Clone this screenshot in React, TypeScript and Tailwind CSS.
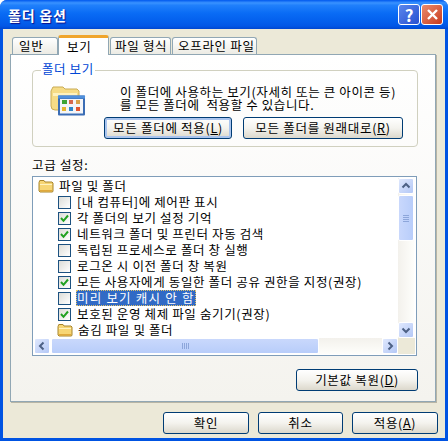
import React from "react";

const FONT = "font-['Noto_Sans_CJK_KR','Liberation_Sans',sans-serif]";

const ROWS = [
  { label: "[내 컴퓨터]에 제어판 표시", checked: false },
  { label: "각 폴더의 보기 설정 기억", checked: true },
  { label: "네트워크 폴더 및 프린터 자동 검색", checked: true },
  { label: "독립된 프로세스로 폴더 창 실행", checked: false },
  { label: "로그온 시 이전 폴더 창 복원", checked: false },
  { label: "모든 사용자에게 동일한 폴더 공유 권한을 지정(권장)", checked: true },
  { label: "미리 보기 캐시 안 함", checked: false, selected: true },
  { label: "보호된 운영 체제 파일 숨기기(권장)", checked: true },
];

const Folder = () => (
  <svg width="16" height="14" viewBox="0 0 16 14" className="shrink-0">
    <path d="M1 3.5 L1.8 1.5 H6 L7 3 H14 L15 4 V12.5 L14 13 H2 L1 12 Z" fill="#f7d675" stroke="#a8852c" strokeWidth="1" />
    <path d="M2 5 H14 V6 H2 Z" fill="#fff3c0" />
    <path d="M2 11 H14 V12.5 H2 Z" fill="#e0a93c" />
  </svg>
);

const Check = () => (
  <svg width="9" height="9" viewBox="0 0 9 9">
    <path d="M1 4 L3.5 6.8 L8 1.5" fill="none" stroke="#21a121" strokeWidth="2" />
  </svg>
);

const Arrow = ({ dir }: { dir: "up" | "down" | "left" | "right" }) => {
  const d = {
    up: "M1.5 6.5 L5 3 L8.5 6.5",
    down: "M1.5 3.5 L5 7 L8.5 3.5",
    left: "M6.5 1.5 L3 5 L6.5 8.5",
    right: "M3.5 1.5 L7 5 L3.5 8.5",
  }[dir];
  return (
    <svg width="10" height="10" viewBox="0 0 10 10">
      <path d={d} fill="none" stroke="#4d6185" strokeWidth="2" />
    </svg>
  );
};

const ScrollBtn = ({ dir }: { dir: "up" | "down" | "left" | "right" }) => (
  <div className="w-4 h-4 shrink-0 flex items-center justify-center rounded-[2px] border border-white bg-gradient-to-br from-[#dfe8fd] to-[#b4c8f6]">
    <Arrow dir={dir} />
  </div>
);

const Button = ({
  className,
  focused,
  children,
}: {
  className: string;
  focused?: boolean;
  children: React.ReactNode;
}) => (
  <div
    className={`${className} flex items-center justify-center rounded-[3px] border border-[#003c74] bg-gradient-to-b from-white via-[#f4f3ee] to-[#dcd8cc] text-[12.5px] leading-none text-black tracking-[0.7px] ${
      focused ? "shadow-[inset_0_0_0_2px_#a9c4ee]" : ""
    }`}
  >
    <span>{children}</span>
  </div>
);

const Tab = ({ label, className }: { label: string; className: string }) => (
  <div
    className={`${className} h-[17px] mt-[2px] flex items-center whitespace-nowrap rounded-t-[3px] border border-b-0 border-[#91a7b4] bg-gradient-to-b from-white to-[#ecebe4] text-[12.5px] leading-none tracking-[0.7px]`}
  >
    {label}
  </div>
);

const ViewIcon = () => (
  <svg width="36" height="30" viewBox="0 0 36 30">
    <path d="M1 5 L3 1 H13 L15 3 H27 L29 5 V24 H5 Q1 24 1 20 Z" fill="#f6dc86" stroke="#c9ab55" />
    <path d="M3 7 H27 V10 H3 Z" fill="#fff2bd" />
    <rect x="8" y="9.5" width="27" height="20" rx="1" fill="#3b6db5" />
    <rect x="8" y="9.5" width="27" height="3" fill="#4f8fdc" />
    <rect x="10" y="13" width="23" height="14.5" fill="#f4f5f8" />
    <rect x="12" y="14" width="5" height="4" fill="#3fa535" />
    <rect x="19" y="14" width="4" height="4" fill="#d8684e" />
    <rect x="26" y="14" width="4" height="4" fill="#d9a24b" />
    <rect x="12" y="21" width="4" height="4" fill="#e7b52f" />
    <rect x="19" y="21" width="4" height="4" fill="#2f86c9" />
    <rect x="26" y="21" width="4" height="4" fill="#e2552f" />
  </svg>
);

export default function App() {
  return (
    <div className={`${FONT} w-[448px] h-[441px] flex flex-col overflow-hidden rounded-t-[7px] bg-[#0053e2] text-black select-none`}>
      {/* Title bar */}
      <div className="h-[29px] shrink-0 flex items-center pl-[8px] pr-[5px] bg-[linear-gradient(to_bottom,#0058ee_0%,#3a93ff_10%,#2080fb_18%,#0a6cf5_45%,#0461ee_70%,#0257e6_90%,#0047d0_100%)]">
        <span className="text-white font-bold text-[14px] leading-none tracking-[0.8px] [text-shadow:1px_1px_1px_#0f1089]">폴더 옵션</span>
        <div className="ml-auto flex gap-[1px]">
          <div className="w-[22px] h-[21px] flex items-center justify-center rounded-[3px] border border-white bg-gradient-to-br from-[#5a86ec] to-[#2a4fd0] text-white font-bold text-[17px] leading-none">?</div>
          <div className="w-[22px] h-[21px] flex items-center justify-center rounded-[3px] border border-white bg-gradient-to-br from-[#ea8a6c] to-[#c8381a]">
            <svg width="13" height="13" viewBox="0 0 13 13">
              <path d="M2 2 L11 11 M11 2 L2 11" stroke="#fff" strokeWidth="2.4" />
            </svg>
          </div>
        </div>
      </div>

      {/* Client area */}
      <div className="flex-1 min-h-0 ml-[3px] mr-[3px] mb-[3px] bg-[#ece9d8] flex flex-col pl-[7px] pr-[2px] pt-[6px]">
        {/* Tabs */}
        <div className="h-[19px] flex items-end pl-[2px] pr-[8px]">
          <Tab label="일반" className="w-[46px] pl-[6px]" />
          <div className="w-[51px] h-[20px] relative z-10 -mb-[1px] flex items-start pl-[8px] pt-[3px] rounded-t-[3px] border-x border-[#91a7b4] border-t-[3px] border-t-[#f0a52c] bg-white text-[12.5px] leading-none tracking-[0.7px]">
            보기
          </div>
          <Tab label="파일 형식" className="w-[61px] ml-[1px] pl-[4px]" />
          <Tab label="오프라인 파일" className="w-[85px] ml-[1px] pl-[5px]" />
        </div>

        {/* Tab page */}
        <div className="h-[348px] w-[426px] shrink-0 border border-[#91a7b4] shadow-[1px_1px_0_#b8b5a5] bg-gradient-to-b from-white to-[#f4f3ee] pl-[21px] pr-[17px] pt-[15px]">
          {/* Group box */}
          <div className="relative h-[77px] rounded-[4px] border border-[#d0d0bf] flex pl-[17px] pt-[15px]">
            <span className="absolute -top-[8px] left-[8px] px-[1px] bg-white text-[#0046d5] text-[12.5px] leading-none tracking-[0.6px]">폴더 보기</span>
            <ViewIcon />
            <div className="ml-[34px] -mt-[1px] flex flex-col">
              <div className="text-[12.5px] leading-[13px] tracking-[0.62px] whitespace-pre">
                {"이 폴더에 사용하는 보기(자세히 또는 큰 아이콘 등)\n를 모든 폴더에  적용할 수 있습니다."}
              </div>
              <div className="mt-[6px] -ml-[16px] flex gap-[11px]">
                <Button className="w-[128px] h-[22px]" focused>
                  모든 폴더에 적용(<u>L</u>)
                </Button>
                <Button className="w-[160px] h-[22px]">
                  모든 폴더를 원래대로(<u>R</u>)
                </Button>
              </div>
            </div>
          </div>

          <div className="mt-[11px] h-[14px] text-[12.5px] leading-[14px] tracking-[0.7px]">고급 설정:</div>

          {/* Settings list */}
          <div className="mt-[4px] h-[180px] w-[385px] border border-[#7f9db9] bg-white flex flex-col p-[1px]">
            <div className="flex h-[160px]">
              <div className="flex-1 min-w-0 pl-[3px] text-[12.5px] leading-none tracking-[0.63px]">
                <div className="h-4 flex items-center gap-[5px] whitespace-nowrap">
                  <span className="ml-[1px] flex"><Folder /></span>
                  <span>파일 및 폴더</span>
                </div>
                {ROWS.map((row) => (
                  <div key={row.label} className="h-4 pl-[21px] flex items-center whitespace-nowrap">
                    <span className="w-[13px] h-[13px] shrink-0 flex items-center justify-center border border-[#1c5180] bg-gradient-to-br from-[#dcdcd7] to-white">
                      {row.checked && <Check />}
                    </span>
                    <span
                      className={`ml-[5px] h-[16px] pl-[1px] pr-[1px] flex items-center ${
                        row.selected ? "bg-[#316ac5] text-white tracking-[1.2px] outline-1 -outline-offset-1 outline-dotted outline-[#e2c36a]" : ""
                      }`}
                    >
                      {row.label}
                    </span>
                  </div>
                ))}
                <div className="h-4 pl-[20px] flex items-center gap-[5px] whitespace-nowrap">
                  <Folder />
                  <span>숨김 파일 및 폴더</span>
                </div>
              </div>
              {/* Vertical scrollbar */}
              <div className="w-[16px] mr-[1px] flex flex-col bg-gradient-to-r from-[#f3f1ec] to-[#fefefb]">
                <ScrollBtn dir="up" />
                <div className="mt-[1px] h-[46px] flex flex-col items-center justify-center gap-[1px] rounded-[2px] border border-white bg-gradient-to-r from-[#c9d8fc] to-[#b8cdfa]">
                  <span className="w-[6px] h-[1px] bg-[#8da6da]" />
                  <span className="w-[6px] h-[1px] bg-[#8da6da]" />
                  <span className="w-[6px] h-[1px] bg-[#8da6da]" />
                  <span className="w-[6px] h-[1px] bg-[#8da6da]" />
                </div>
                <div className="flex-1" />
                <ScrollBtn dir="down" />
              </div>
            </div>
            {/* Horizontal scrollbar */}
            <div className="h-[16px] flex">
              <ScrollBtn dir="left" />
              <div className="ml-[1px] w-[268px] flex items-center justify-center gap-[1px] rounded-[2px] border border-white bg-gradient-to-b from-[#c9d8fc] to-[#b8cdfa]">
                <span className="w-[1px] h-[6px] bg-[#8da6da]" />
                <span className="w-[1px] h-[6px] bg-[#8da6da]" />
                <span className="w-[1px] h-[6px] bg-[#8da6da]" />
                <span className="w-[1px] h-[6px] bg-[#8da6da]" />
              </div>
              <div className="flex-1 bg-gradient-to-b from-[#f3f1ec] to-[#fefefb]" />
              <ScrollBtn dir="right" />
              <div className="w-[17px] bg-[#ece9d8]" />
            </div>
          </div>

          <div className="mt-[13px] flex justify-end">
            <Button className="w-[122px] h-[22px]">
              기본값 복원(<u>D</u>)
            </Button>
          </div>
        </div>

        {/* Dialog buttons */}
        <div className="mt-[10px] pr-[5px] flex justify-end gap-[9px]">
          <Button className="w-[86px] h-[22px]">확인</Button>
          <Button className="w-[85px] h-[22px]">취소</Button>
          <Button className="w-[86px] h-[22px]">
            적용(<u>A</u>)
          </Button>
        </div>
      </div>
    </div>
  );
}
